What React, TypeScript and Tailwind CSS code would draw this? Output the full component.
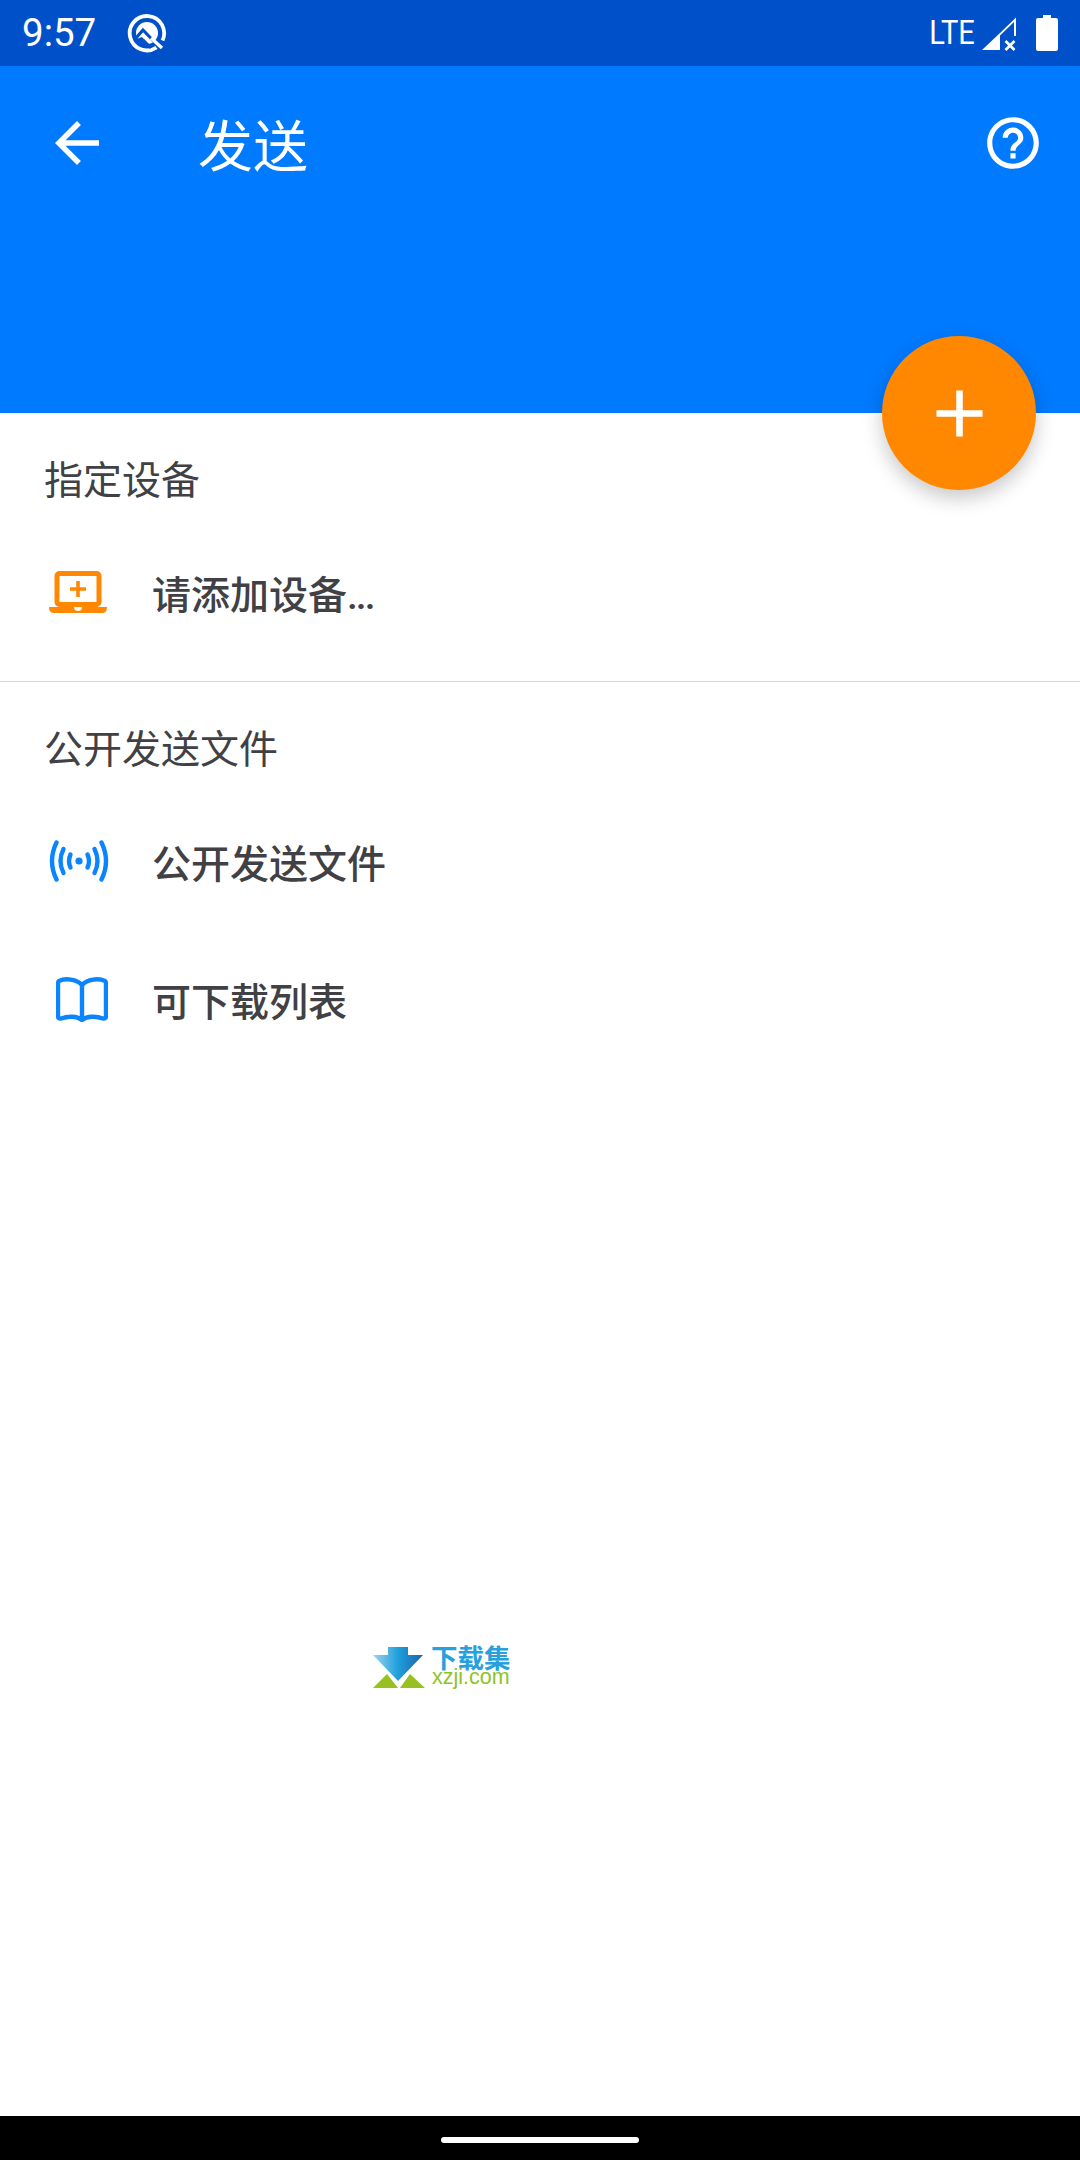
import React from "react";

const cjk = "font-['Noto_Sans_CJK_SC',sans-serif]";

function Back() {
  return (
    <svg width="66" height="66" viewBox="0 0 24 24" fill="#fff">
      <path d="M20 11H7.83l5.59-5.59L12 4l-8 8 8 8 1.41-1.41L7.83 13H20v-2z" />
    </svg>
  );
}

function Help() {
  return (
    <svg width="62" height="62" viewBox="0 0 24 24" fill="#fff">
      <path d="M11 18h2v-2h-2v2zm1-16C6.48 2 2 6.48 2 12s4.48 10 10 10 10-4.48 10-10S17.52 2 12 2zm0 18c-4.41 0-8-3.59-8-8s3.59-8 8-8 8 3.59 8 8-3.59 8-8 8zm0-14c-2.21 0-4 1.79-4 4h2c0-1.1.9-2 2-2s2 .9 2 2c0 2-3 1.75-3 5h2c0-2.25 3-2.5 3-5 0-2.21-1.79-4-4-4z" />
    </svg>
  );
}

function Plus() {
  return (
    <svg width="79" height="79" viewBox="0 0 24 24" fill="#fff">
      <path d="M19 13h-6v6h-2v-6H5v-2h6V5h2v6h6v2z" />
    </svg>
  );
}

function QLogo() {
  return (
    <svg width="40" height="40" viewBox="0 0 40 40" fill="none">
      <path d="M29.5 34.500A17.2 17.2 0 1 1 35.500 27.500" stroke="#fff" strokeWidth="3.8" />
      <circle cx="20" cy="20" r="11" fill="#fff" />
      <path d="M9 25 L16 17 L28 29.500" stroke="#0051c9" strokeWidth="3.2" />
      <path d="M7 27 L14 34 L24 34 L15 24 Z" fill="#0051c9" />
      <path d="M16 27 L24 35" stroke="#0051c9" strokeWidth="3" />
      <path d="M24 25 L35 35" stroke="#fff" strokeWidth="3.4" />
    </svg>
  );
}

function Signal() {
  return (
    <svg width="36" height="35" viewBox="0 0 36 35" fill="#fff">
      <path d="M1 34 L19 17 V34 Z" />
      <path d="M19 17 L35 1.500 V20 H33 V6 L19 19.500 Z" />
      <path d="M24.500 25 L29 29.500 M33.500 25 L29 29.500 M24.500 34 L29 29.500 M33.500 34 L29 29.500" stroke="#fff" strokeWidth="2.6" fill="none" />
    </svg>
  );
}

function Battery() {
  return (
    <svg width="22" height="36" viewBox="0 0 22 36" fill="#fff">
      <path d="M7 0 H15 V3 H20 Q22 3 22 5 V34 Q22 36 20 36 H2 Q0 36 0 34 V5 Q0 3 2 3 H7 Z" />
    </svg>
  );
}

function Laptop() {
  return (
    <svg width="58" height="42" viewBox="0 0 58 42" fill="none">
      <rect x="8" y="2.500" width="42" height="31" rx="2.500" stroke="#ff8800" strokeWidth="5" />
      <path d="M29 10 V26 M21 18 H37" stroke="#ff8800" strokeWidth="3.6" />
      <path d="M0 36 H25 A4 4 0 0 0 33 36 H58 Q58 42 53 42 H5 Q0 42 0 36 Z" fill="#ff8800" />
    </svg>
  );
}

function Broadcast() {
  return (
    <svg width="60" height="42" viewBox="0 0 60 42" fill="none" stroke="#0a84ff" strokeWidth="4.4" strokeLinecap="round">
      <circle cx="30" cy="21" r="3.6" fill="#0a84ff" stroke="none" />
      <path d="M21.500 14.500 Q18.500 21 21.500 27.500 M38.500 14.500 Q41.500 21 38.500 27.500" />
      <path d="M14.500 9 Q8.500 21 14.500 33 M45.500 9 Q51.500 21 45.500 33" />
      <path d="M7.500 2.500 Q-1.500 21 7.500 39.500 M52.500 2.500 Q61.500 21 52.500 39.500" />
    </svg>
  );
}

function Book() {
  return (
    <svg width="52" height="45" viewBox="0 0 52 45" fill="none" stroke="#0a84ff" strokeWidth="4.4" strokeLinejoin="round" strokeLinecap="round">
      <path d="M26 8 C21 2 9 1 3 4 Q2 4.500 2 7 V39 Q2 42 5 41.500 C12 39 21 39 26 43 C31 39 40 39 47 41.500 Q50 42 50 39 V7 Q50 4.500 49 4 C43 1 31 2 26 8 Z" />
      <path d="M26 8 V42" />
    </svg>
  );
}

function XzjiLogo() {
  return (
    <div className="absolute left-[373px] top-[1647px] flex items-start gap-[4px]">
      <svg width="54" height="44" viewBox="0 0 54 44">
        <defs>
          <linearGradient id="xzarrow" x1="0" x2="1" y1="0" y2="0">
            <stop offset="0" stopColor="#9ed4ee" />
            <stop offset="0.5" stopColor="#1f9fdc" />
            <stop offset="1" stopColor="#1d62ad" />
          </linearGradient>
        </defs>
        <path d="M15 0 H35 V8 H50 L25 34 L0 8 H15 Z" fill="url(#xzarrow)" />
        <path d="M0 41 L14 27 L25 41 Z" fill="#96c11f" />
        <path d="M27 41 L37 27 L52 41 Z" fill="#96c11f" />
      </svg>
      <div className="flex flex-col">
        <span className={`${cjk} h-[20px] text-[26.5px] leading-[20px] font-bold text-[#28a0dc] whitespace-nowrap`}>下载集</span>
        <span className="ml-[1px] font-['Liberation_Sans',sans-serif] h-[20px] text-[21.5px] leading-[21px] text-[#8fc31f] whitespace-nowrap">xzji.com</span>
      </div>
    </div>
  );
}

function Header({ children }: { children: React.ReactNode }) {
  return (
    <div className={`${cjk} h-[110px] px-[44px] pt-[41px] text-[39px] leading-[46px] text-[#404045] whitespace-nowrap`}>
      {children}
    </div>
  );
}

function Row({ icon, label }: { icon: React.ReactNode; label: React.ReactNode }) {
  return (
    <div className="flex h-[138px] items-center pl-[49px]">
      <div className="flex w-[103px] shrink-0 items-center">{icon}</div>
      <span className={`font-['Roboto','Noto_Sans_CJK_SC',sans-serif] mt-[8px] text-[39px] leading-[46px] font-medium text-[#404045] whitespace-nowrap`}>{label}</span>
    </div>
  );
}

export default function App() {
  return (
    <div className="relative flex h-[2160px] w-[1080px] flex-col overflow-hidden bg-white">
      <div className="flex h-[66px] shrink-0 items-center bg-[#0051c9] pl-[22px] pr-[22px] text-white">
        <span className="font-['Roboto',sans-serif] text-[38.5px] leading-[66px]">9:57</span>
        <div className="ml-[31px] flex items-center"><QLogo /></div>
        <div className="flex-1" />
        <span className="origin-right scale-x-[0.88] font-['Roboto',sans-serif] text-[33px] leading-[66px]">LTE</span>
        <div className="ml-[6px] flex items-center"><Signal /></div>
        <div className="ml-[19px] flex items-center"><Battery /></div>
      </div>

      <div className="flex h-[347px] shrink-0 items-start bg-[#007aff] text-white">
        <div className="flex h-[153px] w-full items-center pl-[44px] pr-[36px]">
          <Back />
          <span className={`${cjk} ml-[88px] mt-[-2px] text-[55px] leading-[66px] whitespace-nowrap`}>发送</span>
          <div className="flex-1" />
          <Help />
        </div>
      </div>

      <div className="flex flex-1 flex-col">
        <Header>指定设备</Header>
        <Row icon={<Laptop />} label={<>请添加设备<span className="tracking-[-2px]">...</span></>} />
        <div className="mt-[20px] h-[1px] bg-[#d5d5d5]" />
        <Header>公开发送文件</Header>
        <Row icon={<Broadcast />} label="公开发送文件" />
        <Row icon={<div className="pl-[7px]"><Book /></div>} label="可下载列表" />
      </div>

      <div className="flex h-[44px] shrink-0 items-start justify-center bg-black pt-[21px]">
        <div className="h-[6px] w-[198px] rounded-full bg-white" />
      </div>

      <div className="absolute left-[882px] top-[336px] flex h-[154px] w-[154px] items-center justify-center rounded-full bg-[#ff8800] shadow-[0_8px_20px_rgba(0,0,0,0.22)]">
        <Plus />
      </div>
      <XzjiLogo />
    </div>
  );
}
